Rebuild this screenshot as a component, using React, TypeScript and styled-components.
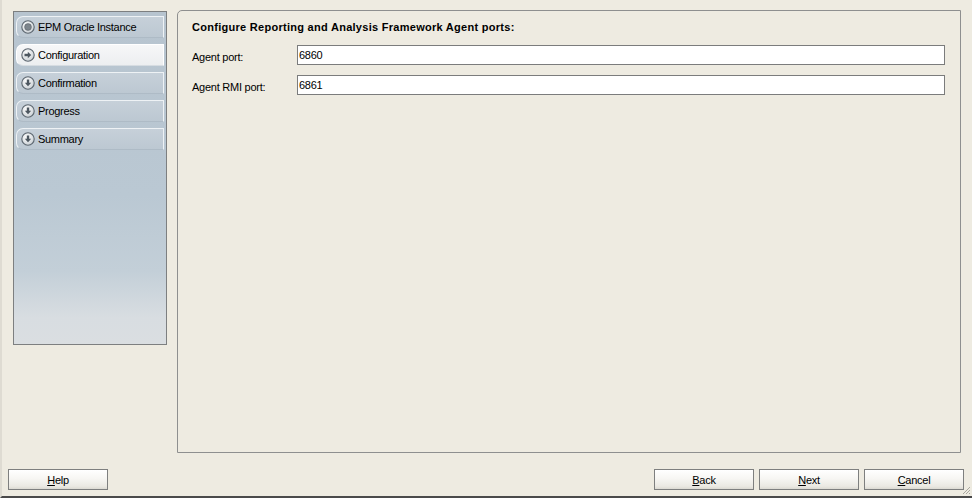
import React from "react";
import styled, { createGlobalStyle } from "styled-components";

const Global = createGlobalStyle`
  html, body { margin: 0; padding: 0; background: #eeebe1; }
  * { box-sizing: border-box; }
`;

const Frame = styled.div`
  position: relative;
  width: 972px;
  height: 498px;
  background: #eeebe1;
  border-left: 2px solid #dedbd2;
  border-bottom: 2px solid #4a4a4a;
  display: flex;
  flex-direction: column;
  font-family: "Liberation Sans", Arial, sans-serif;
  font-size: 11px;
  letter-spacing: -0.25px;
  color: #000;
  overflow: hidden;
`;

const Main = styled.div`
  display: flex;
  align-items: flex-start;
  padding: 10px 0 0 11px;
  gap: 10px;
`;

const NavPanel = styled.div`
  width: 154px;
  height: 334px;
  margin-top: 1px;
  border: 1px solid #7d7f80;
  background: linear-gradient(180deg, #b7c4cf 0%, #bac8d3 55%, #c3cfd8 78%, #d8dde1 92%, #dadee1 100%);
  padding: 4px 2px 0 2px;
  display: flex;
  flex-direction: column;
  gap: 6px;
`;

const NavItem = styled.div<{ $active?: boolean }>`
  height: 22px;
  width: 148px;
  display: flex;
  align-items: center;
  gap: 3px;
  padding-left: 4px;
  border: 1px solid ${(p) => (p.$active ? "#ffffff" : "#eef2f5")};
  border-bottom-color: ${(p) => (p.$active ? "#d6dce1" : "#aebbc6")};
  border-radius: 7px 0 0 7px;
  background: ${(p) =>
    p.$active
      ? "linear-gradient(180deg, #f6f7f8 0%, #eceef0 100%)"
      : "linear-gradient(180deg, #c6d0d9 0%, #bcc8d2 100%)"};
  color: #000;
  white-space: nowrap;
  letter-spacing: -0.3px;
`;

const Content = styled.div`
  width: 784px;
  height: 443px;
  border: 1px solid #8e8f8f;
  border-top-left-radius: 5px;
  padding: 10px 15px 0 14px;
  display: flex;
  flex-direction: column;
`;

const Title = styled.div`
  font-weight: bold;
  font-size: 11px;
  letter-spacing: 0.28px;
  height: 13px;
  line-height: 13px;
  margin-bottom: 11px;
`;

const FieldRow = styled.div`
  display: grid;
  grid-template-columns: 105px 1fr;
  align-items: center;
  height: 20px;
  margin-bottom: 10px;
`;

const Label = styled.span`
  padding-top: 3px;
`;

const Input = styled.input`
  height: 20px;
  width: 648px;
  border: 1px solid #7b7c7c;
  background: #fff;
  font-family: "Liberation Sans", Arial, sans-serif;
  font-size: 11px;
  letter-spacing: -0.25px;
  padding: 0 1px;
  outline: none;
  color: #000;
`;

const Footer = styled.div`
  display: flex;
  align-items: center;
  padding: 16px 0 0 6px;
  margin-top: auto;
  margin-bottom: 7px;
`;

const Spacer = styled.div`
  flex: 1;
`;

const ButtonGroup = styled.div`
  display: flex;
  gap: 5px;
  padding-right: 8px;
`;

const Button = styled.button`
  width: 100px;
  height: 21px;
  border: 1px solid #7e7f7f;
  border-radius: 0;
  background: linear-gradient(180deg, #ffffff 0%, #f7f6f3 45%, #ebe9e3 85%, #dcdad3 100%);
  font-family: "Liberation Sans", Arial, sans-serif;
  font-size: 11px;
  letter-spacing: -0.25px;
  color: #000;
  padding: 0;
  cursor: default;
`;

const Grip = styled.svg`
  position: absolute;
  right: 1px;
  bottom: 1px;
`;

type IconKind = "dot" | "right" | "down";

const StepIcon = ({ kind }: { kind: IconKind }) => (
  <svg width="14" height="14" viewBox="0 0 14 14">
    <defs>
      <radialGradient id={`g-${kind}`} cx="0.4" cy="0.35" r="0.7">
        <stop offset="0" stopColor="#ffffff" />
        <stop offset="1" stopColor="#c8ced3" />
      </radialGradient>
    </defs>
    <circle cx="7" cy="7" r="6.2" fill={`url(#g-${kind})`} stroke="#5d6770" strokeWidth="1.1" />
    {kind === "dot" && <circle cx="7" cy="7" r="3.4" fill="#7d858c" stroke="#5a6168" strokeWidth="0.6" />}
    {kind === "right" && <path d="M3.5 5.8 H6.8 V3.8 L10.2 7 L6.8 10.2 V8.2 H3.5 Z" fill="#4d5760" />}
    {kind === "down" && <path d="M5.8 3.5 V6.8 H3.8 L7 10.2 L10.2 6.8 H8.2 V3.5 Z" fill="#4d5760" />}
  </svg>
);

const steps: { label: string; kind: IconKind; active?: boolean }[] = [
  { label: "EPM Oracle Instance", kind: "dot" },
  { label: "Configuration", kind: "right", active: true },
  { label: "Confirmation", kind: "down" },
  { label: "Progress", kind: "down" },
  { label: "Summary", kind: "down" },
];

const Mn = ({ c, rest }: { c: string; rest: string }) => (
  <span>
    <u>{c}</u>
    {rest}
  </span>
);

export default function App() {
  return (
    <>
      <Global />
      <Frame>
        <Main>
          <NavPanel>
            {steps.map((s) => (
              <NavItem key={s.label} $active={s.active}>
                <StepIcon kind={s.kind} />
                {s.label}
              </NavItem>
            ))}
          </NavPanel>
          <Content>
            <Title>Configure Reporting and Analysis Framework Agent ports:</Title>
            <FieldRow>
              <Label>Agent port:</Label>
              <Input defaultValue="6860" />
            </FieldRow>
            <FieldRow>
              <Label>Agent RMI port:</Label>
              <Input defaultValue="6861" />
            </FieldRow>
          </Content>
        </Main>
        <Footer>
          <Button>
            <Mn c="H" rest="elp" />
          </Button>
          <Spacer />
          <ButtonGroup>
            <Button>
              <Mn c="B" rest="ack" />
            </Button>
            <Button>
              <Mn c="N" rest="ext" />
            </Button>
            <Button>
              <Mn c="C" rest="ancel" />
            </Button>
          </ButtonGroup>
        </Footer>
        <Grip width="10" height="10" viewBox="0 0 10 10">
          <path d="M9 2 L2 9 M9 5 L5 9 M9 8 L8 9" stroke="#a9a79f" strokeWidth="1" />
        </Grip>
      </Frame>
    </>
  );
}
